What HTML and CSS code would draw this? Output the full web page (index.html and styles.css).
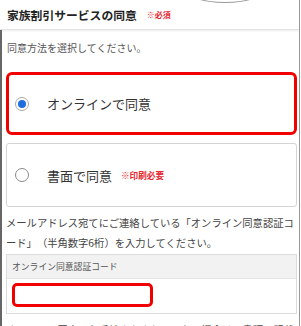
FILE: index.html
```html
<!DOCTYPE html>
<html lang="ja">
<head>
    <meta charset="UTF-8">
    <meta name="viewport" content="width=device-width, initial-scale=1.0">
    <title>家族割引サービスの同意</title>
    <link rel="stylesheet" href="styles.css">
</head>
<body>
    <div class="page">
        <div class="notch"></div>
        <div class="header">
            <h1 class="title">家族割引サービスの同意</h1>
            <span class="required">※必須</span>
        </div>

        <div class="content">
            <p class="lead">同意方法を選択してください。</p>

            <div class="option selected">
                <span class="radio checked"></span>
                <span class="option-label">オンラインで同意</span>
            </div>

            <div class="option">
                <span class="radio"></span>
                <span class="option-label">書面で同意</span>
                <span class="note">※印刷必要</span>
            </div>

            <p class="desc">メールアドレス宛てにご連絡している「オンライン同意認証コード」（半角数字6桁）を入力してください。</p>

            <div class="field">
                <div class="field-head">オンライン同意認証コード</div>
                <div class="field-body">
                    <div class="code-input"></div>
                </div>
            </div>

            <p class="desc">オンライン同意のお手続きをされていない場合は、書類に記載の</p>
        </div>
    </div>
</body>
</html>
```

FILE: styles.css
```css
body {
    margin: 0;
    background: #fff;
    font-family: "Noto Sans CJK JP", "Noto Sans", sans-serif;
    color: #333;
    overflow: hidden;
}

.page {
    position: relative;
    width: 299px;
    height: 326px;
    border-right: 1px solid #999;
    overflow: hidden;
}

/* phone frame edge peeking in at the top */
.notch {
    position: absolute;
    left: 183px;
    top: -28px;
    width: 82px;
    height: 29px;
    border: 1px solid #999;
    border-radius: 50%;
}

.header {
    height: 29px;
    display: flex;
    align-items: center;
    padding: 0 7px;
    border-bottom: 1px solid #e2e2e2;
    box-shadow: 0 1px 2px rgba(0, 0, 0, 0.08);
}

.title {
    margin: 0;
    font-size: 11.8px;
    font-weight: bold;
    color: #222;
    line-height: 1;
}

.required {
    margin-left: 10px;
    font-size: 8px;
    font-weight: bold;
    color: #e8272f;
}

.content {
    border-left: 2px solid #666;
    padding: 10px 2px 0 4px;
    min-height: 300px;
}

.lead {
    margin: 0 0 0 1px;
    font-size: 10px;
    line-height: 16px;
    color: #555;
}

.option {
    display: flex;
    align-items: center;
    height: 62px;
    margin-top: 8px;
    padding-left: 8px;
    border: 1px solid #d4d4d4;
    border-radius: 3px;
}

.option.selected {
    height: 57px;
    margin-top: 16px;
    padding-left: 6px;
    border: 3px solid #f20000;
    border-radius: 6px;
}

.radio {
    width: 12px;
    height: 12px;
    border: 1.5px solid #8a8a8a;
    border-radius: 50%;
    display: flex;
    align-items: center;
    justify-content: center;
    flex-shrink: 0;
}

.radio.checked {
    border-color: #aaa;
}

.radio.checked::after {
    content: "";
    width: 8px;
    height: 8px;
    border-radius: 50%;
    background: #1f6fe0;
}

.option-label {
    margin-left: 18px;
    font-size: 13px;
    color: #333;
}

.note {
    margin-left: 9px;
    font-size: 8.6px;
    font-weight: bold;
    color: #e8272f;
}

.desc {
    margin: 6px 0 0 0;
    font-size: 10.3px;
    line-height: 20px;
    color: #444;
    line-break: normal;
    text-spacing-trim: space-all;
}

.field {
    margin-top: 1px;
    border: 1px solid #dcdcdc;
}

.field-head {
    height: 23px;
    line-height: 23px;
    padding-left: 5px;
    font-size: 8.8px;
    color: #555;
    background: #f2f2f2;
    border-bottom: 1px solid #e4e4e4;
}

.field-body {
    padding: 4px 5px 6px;
}

.code-input {
    width: 135px;
    height: 18px;
    border: 3px solid #f20000;
    border-radius: 5px;
}
```
